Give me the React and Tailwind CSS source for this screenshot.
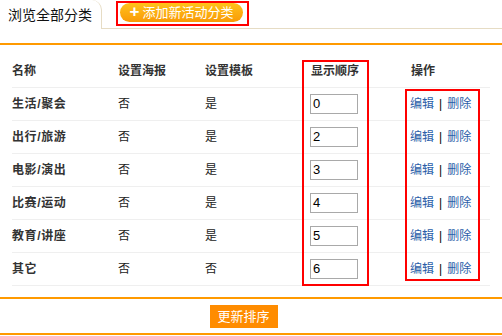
import React from "react";

const rows = [
  ["生活/聚会", "否", "是", "0"],
  ["出行/旅游", "否", "是", "2"],
  ["电影/演出", "否", "是", "3"],
  ["比赛/运动", "否", "是", "4"],
  ["教育/讲座", "否", "是", "5"],
  ["其它", "否", "否", "6"],
];

export default function App() {
  return (
    <div
      className="relative w-[502px] h-[336px] bg-white overflow-hidden text-[12px] text-[#222]"
      style={{ fontFamily: '"Liberation Sans", "Noto Sans CJK SC", sans-serif' }}
    >
      {/* tabs */}
      <div className="flex h-[29px] items-start">
        <div className="w-[102px] h-[29px] bg-white border-r border-[#e6dcc4] rounded-tr-[10px] flex items-center pl-[8px] pt-[2px] text-[14px] text-[#111]">
          浏览全部分类
        </div>
        <div className="flex-1 h-[29px] border-b border-[#e6dcc4] pl-[18px] pt-[3px]">
          <div className="w-[123px] h-[19px] rounded-full bg-gradient-to-b from-[#ffc21a] to-[#f99a06] text-white text-[13px] flex items-center justify-center gap-[3px]">
            <span className="text-[17px] font-bold leading-none mt-[-2px]">+</span>
            <span>添加新活动分类</span>
          </div>
        </div>
      </div>
      <div className="mt-[14px] h-[2px] bg-[#ff9a00]" />

      {/* table */}
      <div className="mt-[10px] px-[12px]">
        <div className="grid grid-cols-[106px_87px_105px_101px_1fr] h-[33px] items-center border-b border-[#efefef] font-bold text-[#333]">
          <div>名称</div>
          <div>设置海报</div>
          <div>设置模板</div>
          <div className="pl-[1px]">显示顺序</div>
          <div className="pl-[0px]">操作</div>
        </div>
        {rows.map((r) => (
          <div
            key={r[0]}
            className="grid grid-cols-[106px_87px_105px_101px_1fr] h-[33px] items-center border-b border-[#efefef]"
          >
            <div className="font-bold text-[#333] tracking-[0.6px]">{r[0]}</div>
            <div>{r[1]}</div>
            <div>{r[2]}</div>
            <div>
              <div className="w-[48px] h-[20px] border border-[#a9a9a9] flex items-center pl-[2px] text-[13px] text-black">
                {r[3]}
              </div>
            </div>
            <div className="flex items-center gap-[5px] text-[#2b5ea8] ml-[-1px]">
              <span>编辑</span>
              <span className="text-black">|</span>
              <span>删除</span>
            </div>
          </div>
        ))}
      </div>

      <div className="mt-[11px] h-[2px] bg-[#ff9a00]" />
      <div className="flex justify-center mt-[6px] pr-[7px]">
        <div className="ml-[-8px] w-[68px] h-[23px] bg-[#ff8c00] text-white text-[13px] flex items-center justify-center">
          更新排序
        </div>
      </div>
      <div className="mt-[5px] h-[2px] bg-[#ff9a00]" />

      {/* annotation boxes */}
      <div className="absolute left-[116px] top-[1px] w-[133px] h-[25px] border-2 border-[#ff0000]" />
      <div className="absolute left-[302px] top-[60px] w-[67px] h-[226px] border-2 border-[#ff0000]" />
      <div className="absolute left-[405px] top-[89px] w-[75px] h-[192px] border-2 border-[#ff0000]" />
    </div>
  );
}
